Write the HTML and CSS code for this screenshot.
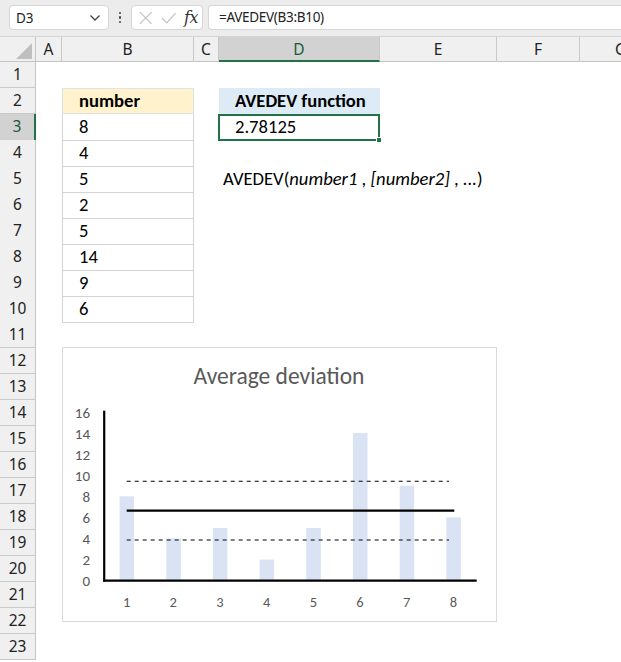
FILE: index.html
```html
<!DOCTYPE html>
<html>
<head>
<meta charset="utf-8">
<link rel="stylesheet" href="styles.css">
</head>
<body>
<div class="app">
  <div class="fbar">
    <div class="namebox"><span>D3</span>
      <svg class="chev" width="12" height="8" viewBox="0 0 12 8"><path d="M1.5 1.5 L6 6 L10.5 1.5" fill="none" stroke="#444" stroke-width="1.3"/></svg>
    </div>
    <div class="vdots"><i></i><i></i><i></i></div>
    <div class="fxbox">
      <svg width="16" height="16" viewBox="0 0 16 16"><path d="M2 2 L14 14 M14 2 L2 14" stroke="#c4c4c4" stroke-width="1.3" fill="none"/></svg>
      <svg width="18" height="16" viewBox="0 0 18 16"><path d="M2 8 L7 13 L16 3" stroke="#c4c4c4" stroke-width="1.3" fill="none"/></svg>
      <span class="fx">fx</span>
    </div>
    <div class="formula">=AVEDEV(B3:B10)</div>
  </div>

  <div class="sheet">
    <div class="row colhead">
      <div class="corner"><span class="tri"></span></div>
      <div class="ch">A</div><div class="ch">B</div><div class="ch">C</div><div class="ch sel">D</div><div class="ch">E</div><div class="ch">F</div><div class="ch last">G</div>
    </div>
    <div class="row"><div class="rh">1</div><div></div><div></div><div></div><div></div><div></div><div></div><div></div></div>
    <div class="row"><div class="rh">2</div><div></div><div class="tc thead">number</div><div></div><div class="dhead">AVEDEV function</div><div></div><div></div><div></div></div>
    <div class="row"><div class="rh rsel">3</div><div></div><div class="tc">8</div><div></div><div class="active">2.78125<span class="handle"></span></div><div></div><div></div><div></div></div>
    <div class="row"><div class="rh">4</div><div></div><div class="tc">4</div><div></div><div></div><div></div><div></div><div></div></div>
    <div class="row"><div class="rh">5</div><div></div><div class="tc">5</div><div></div><div class="syntax">AVEDEV(<em>number1</em> , <em>[number2]</em> , <em>...</em>)</div><div></div><div></div><div></div></div>
    <div class="row"><div class="rh">6</div><div></div><div class="tc">2</div><div></div><div></div><div></div><div></div><div></div></div>
    <div class="row"><div class="rh">7</div><div></div><div class="tc">5</div><div></div><div></div><div></div><div></div><div></div></div>
    <div class="row"><div class="rh">8</div><div></div><div class="tc">14</div><div></div><div></div><div></div><div></div><div></div></div>
    <div class="row"><div class="rh">9</div><div></div><div class="tc">9</div><div></div><div></div><div></div><div></div><div></div></div>
    <div class="row"><div class="rh">10</div><div></div><div class="tc">6</div><div></div><div></div><div></div><div></div><div></div></div>
    <div class="row"><div class="rh">11</div></div>
    <div class="row"><div class="rh">12</div></div>
    <div class="row"><div class="rh">13</div></div>
    <div class="row"><div class="rh">14</div></div>
    <div class="row"><div class="rh">15</div></div>
    <div class="row"><div class="rh">16</div></div>
    <div class="row"><div class="rh">17</div></div>
    <div class="row"><div class="rh">18</div></div>
    <div class="row"><div class="rh">19</div></div>
    <div class="row"><div class="rh">20</div></div>
    <div class="row"><div class="rh">21</div></div>
    <div class="row"><div class="rh">22</div></div>
    <div class="row"><div class="rh">23</div></div>

    <div class="chart">
      <svg width="435" height="275" viewBox="0 0 435 275">
        <text class="title" x="217" y="37" text-anchor="middle">Average deviation</text>
        <g class="ylab" text-anchor="end">
          <text x="28" y="239">0</text>
          <text x="28" y="218">2</text>
          <text x="28" y="197">4</text>
          <text x="28" y="176">6</text>
          <text x="28" y="155">8</text>
          <text x="28" y="134">10</text>
          <text x="28" y="113">12</text>
          <text x="28" y="91.8">14</text>
          <text x="28" y="70.5">16</text>
        </g>
        <g fill="#dae3f3">
          <rect x="57.6" y="149.3" width="14.5" height="84.4"/>
          <rect x="104.3" y="191.5" width="14.5" height="42.2"/>
          <rect x="150.9" y="180.95" width="14.5" height="52.75"/>
          <rect x="197.6" y="212.6" width="14.5" height="21.1"/>
          <rect x="244.3" y="180.95" width="14.5" height="52.75"/>
          <rect x="291" y="86" width="14.5" height="147.7"/>
          <rect x="337.7" y="138.75" width="14.5" height="94.95"/>
          <rect x="384.3" y="170.4" width="14.5" height="63.3"/>
        </g>
        <line x1="64.7" y1="134.3" x2="387" y2="134.3" stroke="#000" stroke-width="1.1" stroke-dasharray="4 4"/>
        <line x1="64.7" y1="193" x2="387" y2="193" stroke="#000" stroke-width="1.1" stroke-dasharray="4 4"/>
        <line x1="64.7" y1="163.7" x2="392.3" y2="163.7" stroke="#000" stroke-width="2.3"/>
        <line x1="42.2" y1="63.7" x2="42.2" y2="234.7" stroke="#000" stroke-width="2.2"/>
        <line x1="41.1" y1="233.7" x2="414.7" y2="233.7" stroke="#000" stroke-width="2.2"/>
        <g class="xlab" text-anchor="middle">
          <text x="64.6" y="259.7">1</text>
          <text x="111.3" y="259.7">2</text>
          <text x="158" y="259.7">3</text>
          <text x="204.7" y="259.7">4</text>
          <text x="251.4" y="259.7">5</text>
          <text x="298" y="259.7">6</text>
          <text x="344.7" y="259.7">7</text>
          <text x="391.4" y="259.7">8</text>
        </g>
      </svg>
    </div>
  </div>
</div>
</body>
</html>
```
FILE: styles.css
```css
* { box-sizing: border-box; }
html, body { margin: 0; padding: 0; background: #fff; }
body { width: 621px; height: 662px; overflow: hidden; font-family: "Carlito", "Lato", sans-serif; }
.app { width: 621px; }

.fbar {
  height: 37px;
  background: #ececec;
  border-bottom: 1px solid #d4d4d4;
  display: flex;
  align-items: flex-start;
  padding: 5px 0 0 9px;
  gap: 0;
  font-family: "Noto Sans", "Open Sans", sans-serif;
}
.namebox {
  width: 100px; height: 25px;
  background: #fff;
  border: 1px solid #d6d6d6;
  border-radius: 4px;
  display: flex; align-items: center; justify-content: space-between;
  padding: 0 7px 0 6px;
  font-size: 13.5px; color: #222;
}
.vdots { width: 22px; height: 25px; display: flex; flex-direction: column; align-items: center; justify-content: center; gap: 2px; }
.vdots i { display: block; width: 2.5px; height: 2.5px; background: #444; border-radius: 50%; }
.fxbox {
  width: 72px; height: 25px;
  background: #fff;
  border: 1px solid #d6d6d6;
  border-radius: 4px;
  display: flex; align-items: center;
  padding: 0 4px 0 6px; gap: 6px;
}
.fx { font-family: "DejaVu Serif", "Liberation Serif", serif; font-style: italic; font-size: 16px; color: #333; margin-left: 1px; letter-spacing: -0.5px; }
.formula {
  flex: 1; height: 25px; margin-left: 5px;
  background: #fff;
  border: 1px solid #d6d6d6; border-right: none;
  border-radius: 4px 0 0 4px;
  font-size: 13.5px; color: #222;
  padding: 2px 0 0 10px;
  letter-spacing: -0.3px;
}

.sheet { position: relative; }
.row {
  display: grid;
  grid-template-columns: 36px 26px 132px 25px 161px 117px 83px 41px;
  height: 26px;
}
.row > div { position: relative; font-size: 18.6px; line-height: 26px; color: #000; }
.colhead { height: 25px; background: #f0f0f0; border-bottom: 1px solid #c4c4c4; }
.colhead > div { line-height: 24px; }
.corner { border-right: 1px solid #c4c4c4; position: relative; }
.tri { position: absolute; right: 3px; bottom: 3px; width: 0; height: 0; border-left: 16px solid transparent; border-bottom: 16px solid #bfbfbf; }
.ch { text-align: center; border-right: 1px solid #c8c8c8; font-family: "Noto Sans", "Open Sans", sans-serif; font-size: 15.5px !important; color: #222 !important; }
.ch.last { border-right: none; text-align: left; padding-left: 35px; }
.ch.sel { background: #d2d2d2; border-bottom: 2px solid #217346; color: #185c37 !important; height: 25px; }
.rh {
  background: #f0f0f0;
  border-right: 1px solid #c4c4c4;
  border-bottom: 1px solid #c8c8c8;
  text-align: center;
  font-family: "Noto Sans", "Open Sans", sans-serif;
  font-size: 15.5px !important;
  color: #222 !important;
  line-height: 25px !important;
}
.rh.rsel { background: #d2d2d2; border-right: 2px solid #217346; color: #185c37 !important; }

.tc {
  border-left: 1px solid #d4d4d4;
  border-right: 1px solid #d4d4d4;
  border-bottom: 1px solid #d4d4d4;
  padding-left: 16px;
  width: 132px;
}
.thead { background: #fff2cc; border-color: #e0e0e0; font-weight: bold; border-top: 1px solid #e3e3e3; line-height: 24px !important; }
.dhead { background: #ddebf7; font-weight: bold; padding-left: 16px; }
.active { border: 2px solid #217346; padding-left: 15px; line-height: 22px !important; margin-left: -1px; }
.handle { position: absolute; right: -4px; bottom: -4px; width: 6px; height: 6px; background: #217346; border: 1px solid #fff; }
.syntax { white-space: nowrap; padding-left: 4px; }
.syntax em { font-style: italic; }

.chart {
  position: absolute;
  left: 62px; top: 310px;
  width: 435px; height: 275px;
  border: 1px solid #d9d9d9;
  background: #fff;
}
.chart svg { display: block; position: absolute; left: -1px; top: -1px; }
.title { font-family: "Carlito", "Lato", sans-serif; font-size: 23.5px; fill: #595959; }
.ylab text { font-family: "Carlito", "Lato", sans-serif; font-size: 15px; fill: #595959; }
.xlab text { font-family: "Carlito", "Lato", sans-serif; font-size: 14.5px; fill: #595959; }
```
